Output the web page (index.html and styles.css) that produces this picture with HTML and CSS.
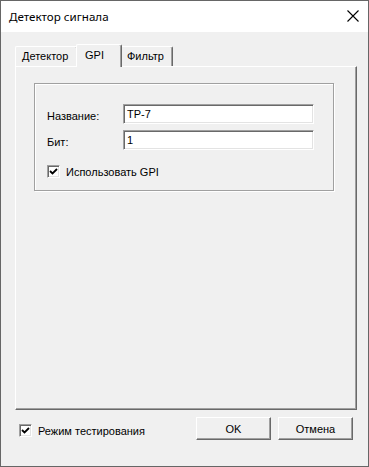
FILE: index.html
```html
<!DOCTYPE html>
<html>
<head>
<meta charset="utf-8">
<link rel="stylesheet" href="styles.css">
</head>
<body>
<div class="window">
  <div class="titlebar">
    <span class="title">Детектор сигнала</span>
    <svg class="close" width="12" height="12" viewBox="0 0 12 12"><path d="M0.5 0.5 L11.5 11.5 M11.5 0.5 L0.5 11.5" stroke="#000" stroke-width="1.1" fill="none"/></svg>
  </div>
  <div class="body">
    <div class="tabs">
      <div class="tab tab-first">Детектор</div>
      <div class="tab tab-active">GPI</div>
      <div class="tab">Фильтр</div>
    </div>
    <div class="panel">
      <div class="group">
        <div class="row">
          <span class="label">Название:</span>
          <div class="input">TP-7</div>
        </div>
        <div class="row row2">
          <span class="label">Бит:</span>
          <div class="input">1</div>
        </div>
        <div class="check-row">
          <span class="checkbox"><svg width="9" height="9" viewBox="0 0 9 9"><path d="M1 4 L3.5 6.5 L8 2" stroke="#000" stroke-width="1.8" fill="none"/></svg></span>
          <span class="check-label">Использовать GPI</span>
        </div>
      </div>
    </div>
    <div class="footer">
      <div class="check-row footer-check">
        <span class="checkbox"><svg width="9" height="9" viewBox="0 0 9 9"><path d="M1 4 L3.5 6.5 L8 2" stroke="#000" stroke-width="1.8" fill="none"/></svg></span>
        <span class="check-label">Режим тестирования</span>
      </div>
      <div class="button">OK</div>
      <div class="button">Отмена</div>
    </div>
  </div>
</div>
</body>
</html>
```

FILE: styles.css
```css
* { box-sizing: border-box; }
html, body { margin: 0; padding: 0; background: #f0f0f0; }
body {
  font-family: "Liberation Sans", Arial, sans-serif;
  font-size: 11px;
  color: #000;
}
.window {
  width: 369px;
  height: 467px;
  border: 1px solid #666;
  display: flex;
  flex-direction: column;
  background: #f0f0f0;
}
.titlebar {
  height: 31px;
  background: #fff;
  display: flex;
  align-items: center;
  padding: 0 9px 0 8px;
  flex: none;
}
.title {
  font-family: "Noto Sans", "Open Sans", sans-serif;
  font-size: 11.6px;
  flex: 1;
  margin-top: -1px;
}
.close { margin-top: -1px; }
.body {
  flex: 1;
  padding: 12px 11px 0 14px;
  display: flex;
  flex-direction: column;
}
.tabs {
  height: 22px;
  display: flex;
  align-items: flex-end;
  position: relative;
  z-index: 2;
}
.tab {
  height: 20px;
  padding: 3px 6px 0 6px;
  border-top: 1px solid #fff;
  border-left: 1px solid #fff;
  border-right: 1px solid #696969;
  box-shadow: inset -1px 0 0 #a0a0a0;
  border-radius: 2px 2px 0 0;
  background: #f0f0f0;
}
.tab-first { width: 63px; }
.tab-active {
  height: 23px;
  margin: 0 -2px -1px -2px;
  width: 46px;
  padding: 4px 8px 0 8px;
  position: relative;
  z-index: 3;
}
.tab-active + .tab { width: 53px; padding-left: 6px; }
.panel {
  height: 344px;
  border-top: 1px solid #fff;
  border-left: 1px solid #fff;
  border-right: 1px solid #696969;
  border-bottom: 1px solid #696969;
  box-shadow: inset -1px -1px 0 #a0a0a0;
  padding: 16px 0 0 18px;
  flex: none;
}
.group {
  width: 300px;
  height: 108px;
  border: 1px solid #a0a0a0;
  box-shadow: inset 1px 1px 0 #fff, 1px 1px 0 #fff;
  padding: 20px 0 0 12px;
}
.row {
  display: flex;
  align-items: center;
  height: 20px;
}
.row2 { margin-top: 6px; }
.label { width: 76px; padding-top: 3px; }
.input {
  width: 191px;
  height: 20px;
  background: #fff;
  border-top: 1px solid #a0a0a0;
  border-left: 1px solid #a0a0a0;
  border-right: 1px solid #fff;
  border-bottom: 1px solid #fff;
  box-shadow: inset 1px 1px 0 #696969, inset -1px -1px 0 #e3e3e3;
  padding: 3px 0 0 3px;
  line-height: 13px;
}
.check-row {
  display: flex;
  align-items: center;
  margin-top: 15px;
  height: 13px;
}
.checkbox {
  width: 13px;
  height: 13px;
  background: #fff;
  border-top: 1px solid #a0a0a0;
  border-left: 1px solid #a0a0a0;
  border-right: 1px solid #fff;
  border-bottom: 1px solid #fff;
  box-shadow: inset 1px 1px 0 #696969, inset -1px -1px 0 #e3e3e3;
  display: flex;
  align-items: center;
  justify-content: center;
  flex: none;
}
.checkbox svg { display: block; }
.check-label { margin-left: 6px; padding-top: 1px; }
.footer {
  display: flex;
  align-items: center;
  margin-top: 7px;
  height: 23px;
  padding-left: 4px;
  padding-right: 4px;
}
.footer-check { margin-top: 3px; flex: 1; }
.button {
  width: 75px;
  height: 23px;
  background: #f0f0f0;
  border-top: 1px solid #fff;
  border-left: 1px solid #fff;
  border-right: 1px solid #696969;
  border-bottom: 1px solid #696969;
  box-shadow: inset -1px -1px 0 #a0a0a0;
  display: flex;
  align-items: center;
  justify-content: center;
  margin-left: 7px;
  padding-top: 1px;
}
```
